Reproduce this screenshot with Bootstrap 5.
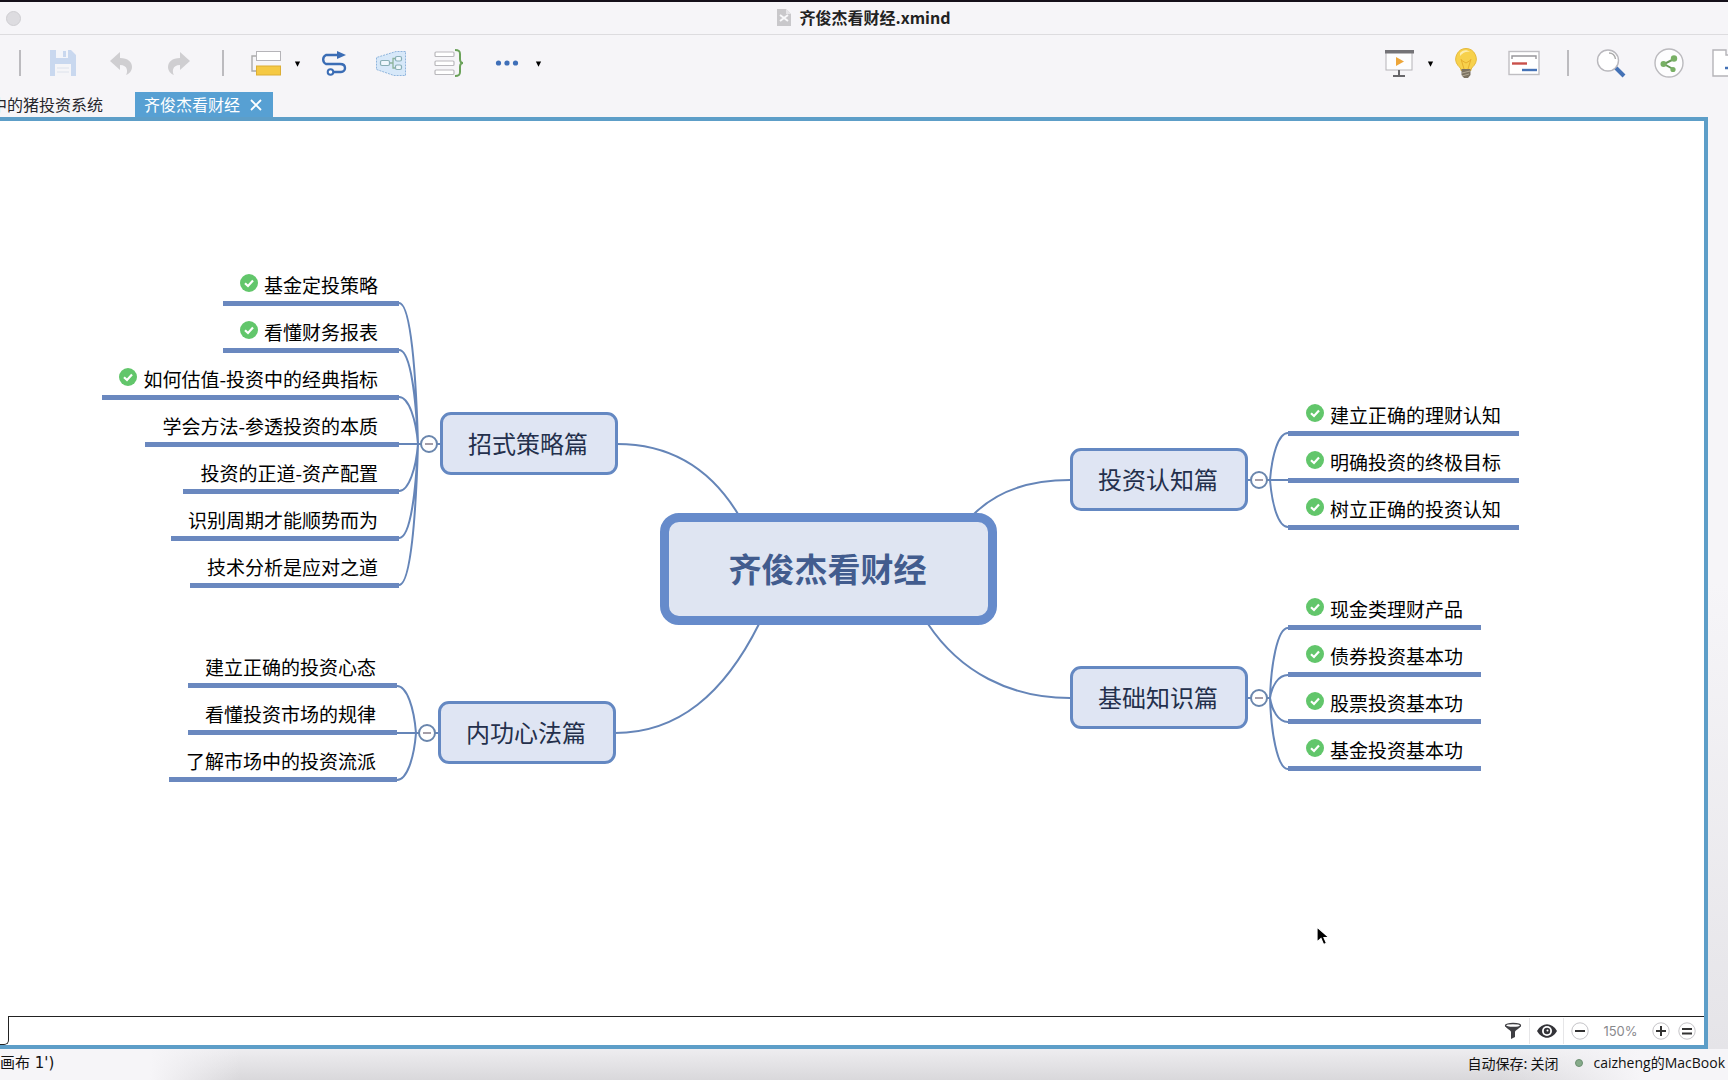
<!DOCTYPE html>
<html lang="zh-CN">
<head>
<meta charset="utf-8">
<meta name="viewport" content="width=device-width, initial-scale=1">
<title>齐俊杰看财经.xmind</title>
<link rel="stylesheet" href="https://cdn.jsdelivr.net/npm/bootstrap@5.3.0/dist/css/bootstrap.min.css">
<style>
  body { font-family: "Noto Sans CJK SC", sans-serif; background: #f6f5f8; color: #111; }
  button { font-family: inherit; }
  .titlebar { height: 35px; border-top: 2px solid #15101a; border-bottom: 1px solid #dddcdf; padding-bottom: 2px; font-size: 16px; line-height: 28px; color: #222; }
  .win-dot { width: 15px; height: 15px; left: 6px; top: 9px; background: #dddce0; border: 1px solid #cfced2; }
  .toolbar { height: 56px; padding-left: 5px; }
  .tool { width: 58px; height: 40px; }
  .tool-caret { width: 7px; height: 40px; margin: 2px 3px 0 -1px; }
  .tool-sep { width: 29px; height: 26px; }
  .tool-sep::before { content: ""; width: 2px; height: 26px; background: #bcbbbf; }
  .tools-end { margin-right: -28px; }
  .bare { background: none; border: 0; padding: 0; display: inline-flex; align-items: center; justify-content: center; flex: none; }
  .tabs { height: 26px; padding-top: 1px; font-size: 16px; line-height: 25px; }
  .tab-prev { width: 135px; padding-right: 32px; direction: rtl; color: #26262c; }
  .tab-now { background: #57a0d3; color: #fff; padding: 0 11px 0 9px; gap: 10px; }
  .editor { border: solid #5d9ec8; border-width: 4px 4px 4px 0; margin-right: 20px; background: #fff; min-height: 0; }
  .map { width: 1704px; height: 895px; flex: none; }
  .wires { left: 0; top: 0; fill: none; stroke: #6585b8; stroke-width: 2; }
  .root-topic { left: 660px; top: 392px; width: 337px; height: 112px; border: 9px solid #668bcb; border-radius: 19px; background: #dfe5f2; color: #425c8e; font-size: 33px; padding-right: 2px; }
  .main-topic { width: 178px; height: 63px; padding: 0 2px 2px 0; border: 3px solid #6488c2; border-radius: 11px; background: #dfe5f3; color: #24304c; font-size: 24px; }
  .fold { width: 18px; height: 18px; border: 2px solid #6a86ad; border-radius: 50%; background: #fff; }
  .fold::before { content: ""; width: 8px; height: 2px; background: #a59ea8; }
  .subs { margin: 0; padding: 0; list-style: none; }
  .sub { height: 47px; padding: 9px 21px 0 17px; gap: 6px; border-bottom: 5px solid #6a88bf; font-size: 19px; line-height: 32px; color: #000; white-space: nowrap; }
  .sub svg { margin-bottom: 3px; }
  .side-right .sub { padding: 9px 18px 0; }
  .side-left .subs { align-items: flex-end; }
  .side-left .fold { margin: 0 2px 0 21px; }
  .side-right .fold { margin: 0 20px 0 2px; }
  .b-strategy { right: 1086px; top: 138px; }
  .b-mind { right: 1088px; top: 520px; }
  .b-know { left: 1070px; top: 268px; }
  .b-base { left: 1070px; top: 462px; }
  .pos-strategy { margin-top: 153px; }
  .pos-mind { margin-top: 60px; }
  .pos-know { margin-top: 59px; }
  .pos-base { margin-top: 83px; }
  .pointer { left: 1315px; top: 804px; }
  .sheetbar { height: 29px; flex: none; }
  .sheet-tab { width: 9px; border-right: 1px solid #222; border-bottom: 1px solid #222; border-bottom-right-radius: 5px; }
  .sheet-rest { border-top: 1px solid #222; font: 13px/26px Inter, sans-serif; color: #8a898d; }
  .cell { width: 34px; border-right: 1px solid #e6e6e8; height: 26px; }
  .zoomer { padding: 0 8px 0 7px; gap: 8px; }
  .zoom-num { width: 39px; font-size: 13px; text-align: center; margin: 0 4px; }
  .statusbar { height: 31px; font-size: 14px; line-height: 28px; padding: 0 3px 3px 0; color: #111;
    background: linear-gradient(90deg, #f6f5f8 150px, rgba(246,245,248,0) 240px, rgba(246,245,248,0) 1500px, #f6f5f8 1640px), linear-gradient(#eeedf0, #d9d8db); }
  .latin { font-family: "Open Sans", "Noto Sans CJK SC", sans-serif; }
  .sheet-name { font-family: "DejaVu Sans", "Noto Sans CJK SC", sans-serif; font-size: 15px; }
  .led { width: 8px; height: 8px; background: #86ab8a; border: 1px solid #6d9072; margin: 0 10px 0 17px; }
  .side-strip { width: 20px; top: 117px; bottom: 31px; right: 0; background: linear-gradient(#f6f5f8 50%, #e5e4e8); }
</style>
<script src="https://cdn.jsdelivr.net/npm/bootstrap@5.3.0/dist/js/bootstrap.bundle.min.js"></script>
</head>
<body class="d-flex flex-column vh-100 overflow-hidden position-relative">

<svg width="0" height="0" class="position-absolute" aria-hidden="true">
  <symbol id="done" viewBox="0 0 18 18"><circle cx="9" cy="9" r="9" fill="#62c66b"/><path d="M5 9.2l3 2.8 5-5.4" fill="none" stroke="#fff" stroke-width="2.2"/></symbol>
  <symbol id="caret" viewBox="0 0 8 8"><path d="M1 1h6L4 7z" fill="#000"/></symbol>
</svg>

<header class="titlebar position-relative d-flex justify-content-center align-items-center flex-shrink-0 fw-bold">
  <span class="win-dot position-absolute rounded-circle"></span>
  <svg class="me-2" width="14" height="17" viewBox="0 0 14 17"><path d="M0 0h9l5 5v12H0z" fill="#c9c8cb"/><path d="M9 0v5h5z" fill="#e6e5e8"/><path d="M3 6l8 6M11 6l-8 6" stroke="#f8f8fa" stroke-width="2"/></svg>
  <span>齐俊杰看财经.xmind</span>
</header>

<div class="toolbar d-flex align-items-center justify-content-between flex-shrink-0 overflow-hidden">
  <div class="d-flex align-items-center">
    <span class="tool-sep d-flex justify-content-center"></span>
    <button class="bare tool" aria-label="保存"><svg width="30" height="30" viewBox="0 0 30 30"><path d="M2 2h21l5 5v21H2z" fill="#c9d8ef"/><path d="M8 2h12v8H8z" fill="#f3f5fa"/><path d="M15 3h3v6h-3z" fill="#c9d8ef"/><path d="M7 16h16v12H7z" fill="#f5f5f8"/><path d="M9 20h12M9 24h12" stroke="#dde2ec"/></svg></button>
    <button class="bare tool" aria-label="撤销"><svg width="30" height="30" viewBox="0 0 30 30"><path d="M4 13L14 4v6c8 0 12 4 12 9 0 4-3 7-6 8 2-3 2-10-6-10v5z" fill="#cfced1"/></svg></button>
    <button class="bare tool" aria-label="重做"><svg width="30" height="30" viewBox="0 0 30 30"><path d="M26 13L16 4v6c-8 0-12 4-12 9 0 4 3 7 6 8-2-3-2-10 6-10v5z" fill="#cfced1"/></svg></button>
    <span class="tool-sep d-flex justify-content-center"></span>
    <button class="bare tool" aria-label="主题"><svg width="30" height="30" viewBox="0 0 30 30"><path d="M5 8H1v15h4" fill="none" stroke="#aaa" stroke-width="1.4"/><rect x="5.500" y="3.500" width="24" height="9" fill="#fff" stroke="#b5b4b8"/><rect x="5.500" y="18" width="24" height="9" fill="#f5c944" stroke="#dcae35"/></svg></button>
    <button class="bare tool-caret" aria-label="更多主题"><svg width="8" height="8"><use href="#caret"/></svg></button>
    <button class="bare tool" aria-label="联系"><svg width="30" height="30" viewBox="0 0 30 30"><path d="M21 7H8a5 5 0 0 0 0 9h14c7 0 6 8 1 8H15" fill="none" stroke="#3b6db5" stroke-width="2.4"/><path d="M19 3l9 4-9 4z" fill="#3b6db5"/><circle cx="12.500" cy="24" r="2.800" fill="#fff" stroke="#3b6db5" stroke-width="2"/></svg></button>
    <button class="bare tool" aria-label="外框"><svg width="30" height="30" viewBox="0 0 30 30"><path d="M29.500 3.500H20L.5 9.500v12L18 27.500h11.500z" fill="#d7e8f9" stroke="#8fb5dd" stroke-dasharray="2 1"/><path d="M14 15h3M18 10.500h2M17 15v5h2M17 15v-4.500h2" fill="none" stroke="#8db39a" stroke-width="1.300"/><g fill="#eff7fd" stroke="#88aeb5" stroke-width="1.200"><rect x="4.500" y="12.500" width="9" height="5" rx="1.500"/><rect x="19.500" y="8.500" width="6" height="4.500" rx="1.500"/><rect x="19.500" y="17" width="6" height="4.500" rx="1.500"/></g></svg></button>
    <button class="bare tool" aria-label="概要"><svg width="30" height="30" viewBox="0 0 30 30"><g fill="#fff" stroke="#b9b8bc" stroke-width="1.200"><rect x="1" y="4" width="19" height="4.500" rx="1"/><rect x="1" y="13" width="19" height="4.500" rx="1"/><rect x="1" y="22" width="19" height="4.500" rx="1"/></g><path d="M21 2c4 0 5 1 5 4v5c0 2 1 4 3 4-2 0-3 2-3 4v5c0 3-1 4-5 4" fill="none" stroke="#6ba25a" stroke-width="2"/></svg></button>
    <button class="bare tool" aria-label="更多"><svg width="30" height="30" viewBox="0 0 30 30" fill="#3f6fb8"><circle cx="6.500" cy="15" r="2.600"/><circle cx="15" cy="15" r="2.600"/><circle cx="23.500" cy="15" r="2.600"/></svg></button>
    <button class="bare tool-caret" aria-label="更多选项"><svg width="8" height="8"><use href="#caret"/></svg></button>
  </div>
  <div class="tools-end d-flex align-items-center">
    <button class="bare tool" aria-label="演示"><svg width="30" height="30" viewBox="0 0 30 30"><rect x="2" y="4" width="26" height="18" fill="#fdfdfe" stroke="#b5b4b8"/><path d="M1 2h29v3.500H1z" fill="#747377"/><path d="M12 9v9l8-4.500z" fill="#eda63a"/><path d="M15 22v5M9 28h12" stroke="#67666a" stroke-width="2"/></svg></button>
    <button class="bare tool-caret" aria-label="演示选项"><svg width="8" height="8"><use href="#caret"/></svg></button>
    <button class="bare tool" aria-label="头脑风暴"><svg width="30" height="30" viewBox="0 0 30 30"><path d="M15 .5a10.500 10.500 0 0 1 8 17c-2 2-3 3-3 5H10c0-2-1-3-3-5a10.500 10.500 0 0 1 8-17z" fill="#f7d14c" stroke="#e5b93a"/><path d="M9 5c2-3 7-4 10-1-3-1-7 0-10 4z" fill="#fdeeb0"/><path d="M10 11l3 10M20 11l-3 10M10 12l5 3 5-3" fill="none" stroke="#e6ae2c"/><path d="M10.500 21h9v6l-2.500 3h-4l-2.500-3z" fill="#7b7262"/><path d="M11 25l8-2M11 28l7-2" stroke="#b5ab97"/></svg></button>
    <button class="bare tool" aria-label="甘特图"><svg width="32" height="30" viewBox="0 0 32 30"><rect x="1" y="3.500" width="30" height="23" fill="#fff" stroke="#bfbec2" stroke-width="1.400"/><path d="M4 11V8h24v3" fill="none" stroke="#98979b" stroke-width="1.400"/><path d="M4 15.500h15" stroke="#c9504a" stroke-width="2.400"/><path d="M14 22h15" stroke="#4573b7" stroke-width="2.400"/></svg></button>
    <span class="tool-sep d-flex justify-content-center"></span>
    <button class="bare tool" aria-label="搜索"><svg width="30" height="30" viewBox="0 0 30 30"><circle cx="12" cy="12.500" r="10.500" fill="#fff" stroke="#b9b8bd" stroke-width="1.400"/><path d="M13 5c4 0 6 3 6.500 6" fill="none" stroke="#aaa" stroke-width="1.400"/><path d="M20 20l8 8" stroke="#4472b6" stroke-width="4"/></svg></button>
    <button class="bare tool" aria-label="分享"><svg width="30" height="30" viewBox="0 0 30 30"><circle cx="15" cy="15" r="14" fill="#fdfdfe" stroke="#bbbabe" stroke-width="1.400"/><path d="M20 11L10 16l9 5" fill="none" stroke="#6a9a5b" stroke-width="2"/><g fill="#78b065"><circle cx="20" cy="10.500" r="3.200"/><circle cx="9.500" cy="16" r="3"/><circle cx="19" cy="21.500" r="2.600"/></g></svg></button>
    <button class="bare tool" aria-label="导出"><svg width="30" height="30" viewBox="0 0 30 30"><path d="M1 2h13v5h5l9 0v21H1z" fill="#fff" stroke="#b5b4b8" stroke-width="1.400"/><path d="M13 20h10" stroke="#4472b6" stroke-width="2.500"/></svg></button>
  </div>
</div>

<nav class="tabs d-flex flex-shrink-0">
  <button class="bare tab-prev justify-content-start overflow-hidden text-nowrap">中的猪投资系统</button>
  <div class="tab-now d-flex align-items-center">
    <span>齐俊杰看财经</span>
    <button class="bare" aria-label="关闭标签"><svg width="12" height="12" viewBox="0 0 12 12"><path d="M1 1l10 10M11 1L1 11" stroke="#fff" stroke-width="1.800"/></svg></button>
  </div>
</nav>

<div class="side-strip position-absolute"></div>
<main class="editor d-flex flex-column flex-grow-1 position-relative">
  <div class="flex-grow-1 d-flex justify-content-center overflow-hidden">
    <div class="map position-relative">
      <svg class="wires position-absolute" width="1704" height="895" viewBox="0 121 1704 895">
        <path d="M617 444C670 444 710 468 738 514"/>
        <path d="M1070 480C1030 480 998 490 974 514"/>
        <path d="M615 733C678 733 724 694 759 624"/>
        <path d="M1070 698C1010 698 960 672 928 624"/>
        <path d="M399 303C411 303 416 375 418 444M399 350C411 350 416 400 418 444M399 397C409 397 416 420 418 444M399 444H440M399 491C409 491 416 468 418 444M399 538C411 538 416 488 418 444M399 585C411 585 416 513 418 444"/>
        <path d="M397 686C407 686 414 708 416 733M397 733H440M397 780C407 780 414 758 416 733"/>
        <path d="M1288 433C1278 433 1272 456 1270 480M1247 480H1288M1288 527C1278 527 1272 504 1270 480"/>
        <path d="M1288 628C1277 628 1271 666 1270 698M1288 675C1278 675 1272 686 1270 698M1247 698H1270M1288 722C1278 722 1272 710 1270 698M1288 769C1277 769 1271 730 1270 698"/>
      </svg>

      <div class="root-topic position-absolute d-flex align-items-center justify-content-center fw-bold">齐俊杰看财经</div>

      <section class="side-left b-strategy position-absolute d-flex align-items-start">
        <ul class="subs d-flex flex-column">
          <li class="sub d-flex align-items-center"><svg width="18" height="18"><use href="#done"/></svg>基金定投策略</li>
          <li class="sub d-flex align-items-center"><svg width="18" height="18"><use href="#done"/></svg>看懂财务报表</li>
          <li class="sub d-flex align-items-center"><svg width="18" height="18"><use href="#done"/></svg>如何估值-投资中的经典指标</li>
          <li class="sub d-flex align-items-center">学会方法-参透投资的本质</li>
          <li class="sub d-flex align-items-center">投资的正道-资产配置</li>
          <li class="sub d-flex align-items-center">识别周期才能顺势而为</li>
          <li class="sub d-flex align-items-center">技术分析是应对之道</li>
        </ul>
        <div class="pos-strategy d-flex align-items-center">
          <button class="bare fold" aria-label="折叠"></button>
          <div class="main-topic d-flex align-items-center justify-content-center">招式策略篇</div>
        </div>
      </section>

      <section class="side-left b-mind position-absolute d-flex align-items-start">
        <ul class="subs d-flex flex-column">
          <li class="sub d-flex align-items-center">建立正确的投资心态</li>
          <li class="sub d-flex align-items-center">看懂投资市场的规律</li>
          <li class="sub d-flex align-items-center">了解市场中的投资流派</li>
        </ul>
        <div class="pos-mind d-flex align-items-center">
          <button class="bare fold" aria-label="折叠"></button>
          <div class="main-topic d-flex align-items-center justify-content-center">内功心法篇</div>
        </div>
      </section>

      <section class="side-right b-know position-absolute d-flex align-items-start">
        <div class="pos-know d-flex align-items-center">
          <div class="main-topic d-flex align-items-center justify-content-center">投资认知篇</div>
          <button class="bare fold" aria-label="折叠"></button>
        </div>
        <ul class="subs d-flex flex-column">
          <li class="sub d-flex align-items-center"><svg width="18" height="18"><use href="#done"/></svg>建立正确的理财认知</li>
          <li class="sub d-flex align-items-center"><svg width="18" height="18"><use href="#done"/></svg>明确投资的终极目标</li>
          <li class="sub d-flex align-items-center"><svg width="18" height="18"><use href="#done"/></svg>树立正确的投资认知</li>
        </ul>
      </section>

      <section class="side-right b-base position-absolute d-flex align-items-start">
        <div class="pos-base d-flex align-items-center">
          <div class="main-topic d-flex align-items-center justify-content-center">基础知识篇</div>
          <button class="bare fold" aria-label="折叠"></button>
        </div>
        <ul class="subs d-flex flex-column">
          <li class="sub d-flex align-items-center"><svg width="18" height="18"><use href="#done"/></svg>现金类理财产品</li>
          <li class="sub d-flex align-items-center"><svg width="18" height="18"><use href="#done"/></svg>债券投资基本功</li>
          <li class="sub d-flex align-items-center"><svg width="18" height="18"><use href="#done"/></svg>股票投资基本功</li>
          <li class="sub d-flex align-items-center"><svg width="18" height="18"><use href="#done"/></svg>基金投资基本功</li>
        </ul>
      </section>

      <svg class="pointer position-absolute" width="16" height="22" viewBox="0 0 16 22"><path d="M2 2v15l4-3.500 2.500 6 3-1.300L9 12.500h5z" fill="#000" stroke="#fff" stroke-width="1.200"/></svg>
    </div>
  </div>

  <div class="sheetbar d-flex">
    <div class="sheet-tab"></div>
    <div class="sheet-rest flex-grow-1 d-flex justify-content-end align-items-center">
      <button class="bare cell" aria-label="筛选"><svg width="18" height="18" viewBox="0 0 18 18"><path d="M1 3c0 3 6 5 6 7v7l4-2v-5c0-2 6-4 6-7z" fill="#3f3f43"/><ellipse cx="9" cy="3.500" rx="7.500" ry="2" fill="#fff" stroke="#3f3f43" stroke-width="1.300"/></svg></button>
      <button class="bare cell" aria-label="显示"><svg width="20" height="14" viewBox="0 0 20 14"><path d="M0 7c5-9 15-9 20 0-5 9-15 9-20 0z" fill="#333338"/><circle cx="10" cy="7" r="5" fill="#fff"/><circle cx="10" cy="7" r="3.200" fill="#333338"/><circle cx="10.500" cy="6.500" r="1" fill="#fff"/></svg></button>
      <div class="zoomer d-flex align-items-center">
        <button class="bare" aria-label="缩小"><svg width="18" height="18" viewBox="0 0 18 18"><circle cx="9" cy="9" r="8.200" fill="#fff" stroke="#c5c4c8"/><path d="M4 9h10" stroke="#333" stroke-width="2"/></svg></button>
        <span class="zoom-num">150%</span>
        <button class="bare" aria-label="放大"><svg width="18" height="18" viewBox="0 0 18 18"><circle cx="9" cy="9" r="8.200" fill="#fff" stroke="#c5c4c8"/><path d="M4 9h10M9 4v10" stroke="#333" stroke-width="2"/></svg></button>
        <button class="bare" aria-label="实际大小"><svg width="18" height="18" viewBox="0 0 18 18"><circle cx="9" cy="9" r="8.200" fill="#fff" stroke="#c5c4c8"/><path d="M4 7h10M4 11.500h10" stroke="#333" stroke-width="1.800"/></svg></button>
      </div>
    </div>
  </div>
</main>

<footer class="statusbar d-flex align-items-center flex-shrink-0">
  <span class="sheet-name me-auto">画布 1')</span>
  <span>自动保存: 关闭</span>
  <span class="led rounded-circle"></span>
  <span class="latin">caizheng的MacBook</span>
</footer>
</body>
</html>
